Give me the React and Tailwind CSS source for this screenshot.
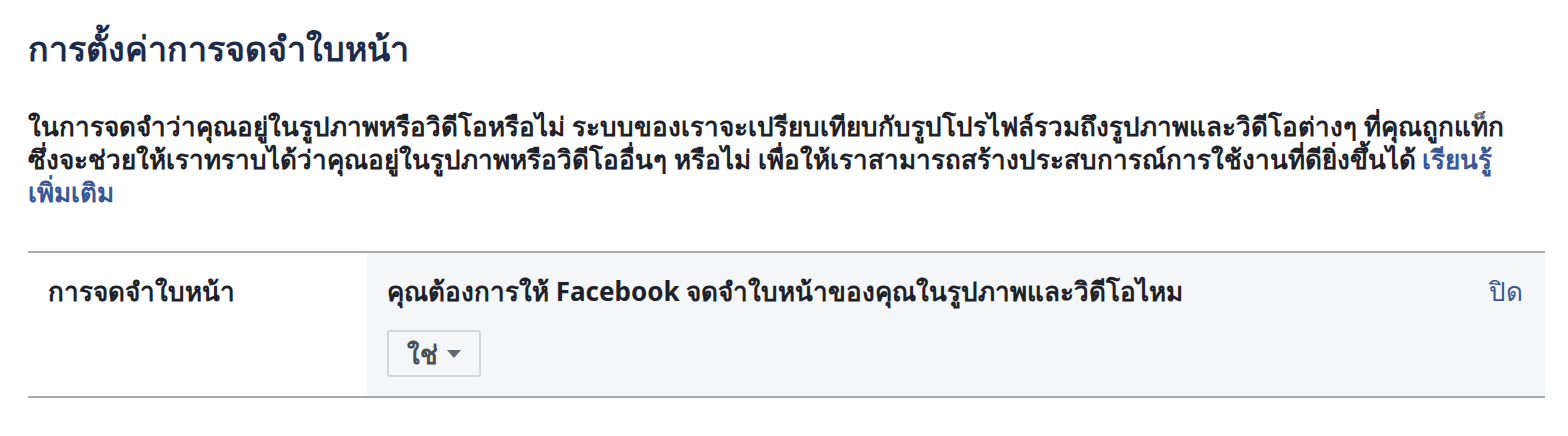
export default function App() {
  return (
    <div className="w-[1568px] h-[436px] bg-white">
      <div className="pl-[28px] pr-[23px] pt-[26px] font-['Noto_Sans','Liberation_Sans',sans-serif]">
        <h1 className="text-[34px] leading-[44px] font-bold text-[#1c2b4a] whitespace-nowrap">การตั้งค่าการจดจำใบหน้า</h1>
        <p className="mt-[40px] w-[1530px] text-[26px] leading-[33px] font-bold text-[#1d2129] whitespace-nowrap">
          ในการจดจำว่าคุณอยู่ในรูปภาพหรือวิดีโอหรือไม่ ระบบของเราจะเปรียบเทียบกับรูปโปรไฟล์รวมถึงรูปภาพและวิดีโอต่างๆ ที่คุณถูกแท็ก
          <br />
          ซึ่งจะช่วยให้เราทราบได้ว่าคุณอยู่ในรูปภาพหรือวิดีโออื่นๆ หรือไม่ เพื่อให้เราสามารถสร้างประสบการณ์การใช้งานที่ดียิ่งขึ้นได้{" "}
          <a className="text-[#385898]">เรียนรู้</a>
          <br />
          <a className="text-[#385898]">เพิ่มเติม</a>
        </p>
        <div className="mt-[42px] flex border-t-2 border-b-2 border-[#aaaaaa] h-[147px]">
          <div className="w-[339px] pl-[20px] pt-[22px] text-[26px] leading-[33px] font-bold text-[#1d2129]">การจดจำใบหน้า</div>
          <div className="flex-1 bg-[#f5f6f7] pl-[20px] pr-[22px] pt-[22px] flex">
            <div className="flex-1">
              <div className="text-[26px] leading-[33px] font-bold text-[#1d2129]">คุณต้องการให้ Facebook จดจำใบหน้าของคุณในรูปภาพและวิดีโอไหม</div>
              <button className="mt-[22px] w-[94px] h-[47px] border-2 border-[#d3d6db] rounded-[3px] bg-[#f5f6f7] flex items-center pl-[18px] gap-[9px] text-[26px] font-bold text-[#4b4f56]">
                <span className="leading-[30px]">ใช่</span>
                <svg width="14" height="8" viewBox="0 0 14 8"><path d="M0 0 L14 0 L7 8 Z" fill="#606770" /></svg>
              </button>
            </div>
            <a className="text-[26px] leading-[33px] text-[#385898]">ปิด</a>
          </div>
        </div>
      </div>
    </div>
  );
}
